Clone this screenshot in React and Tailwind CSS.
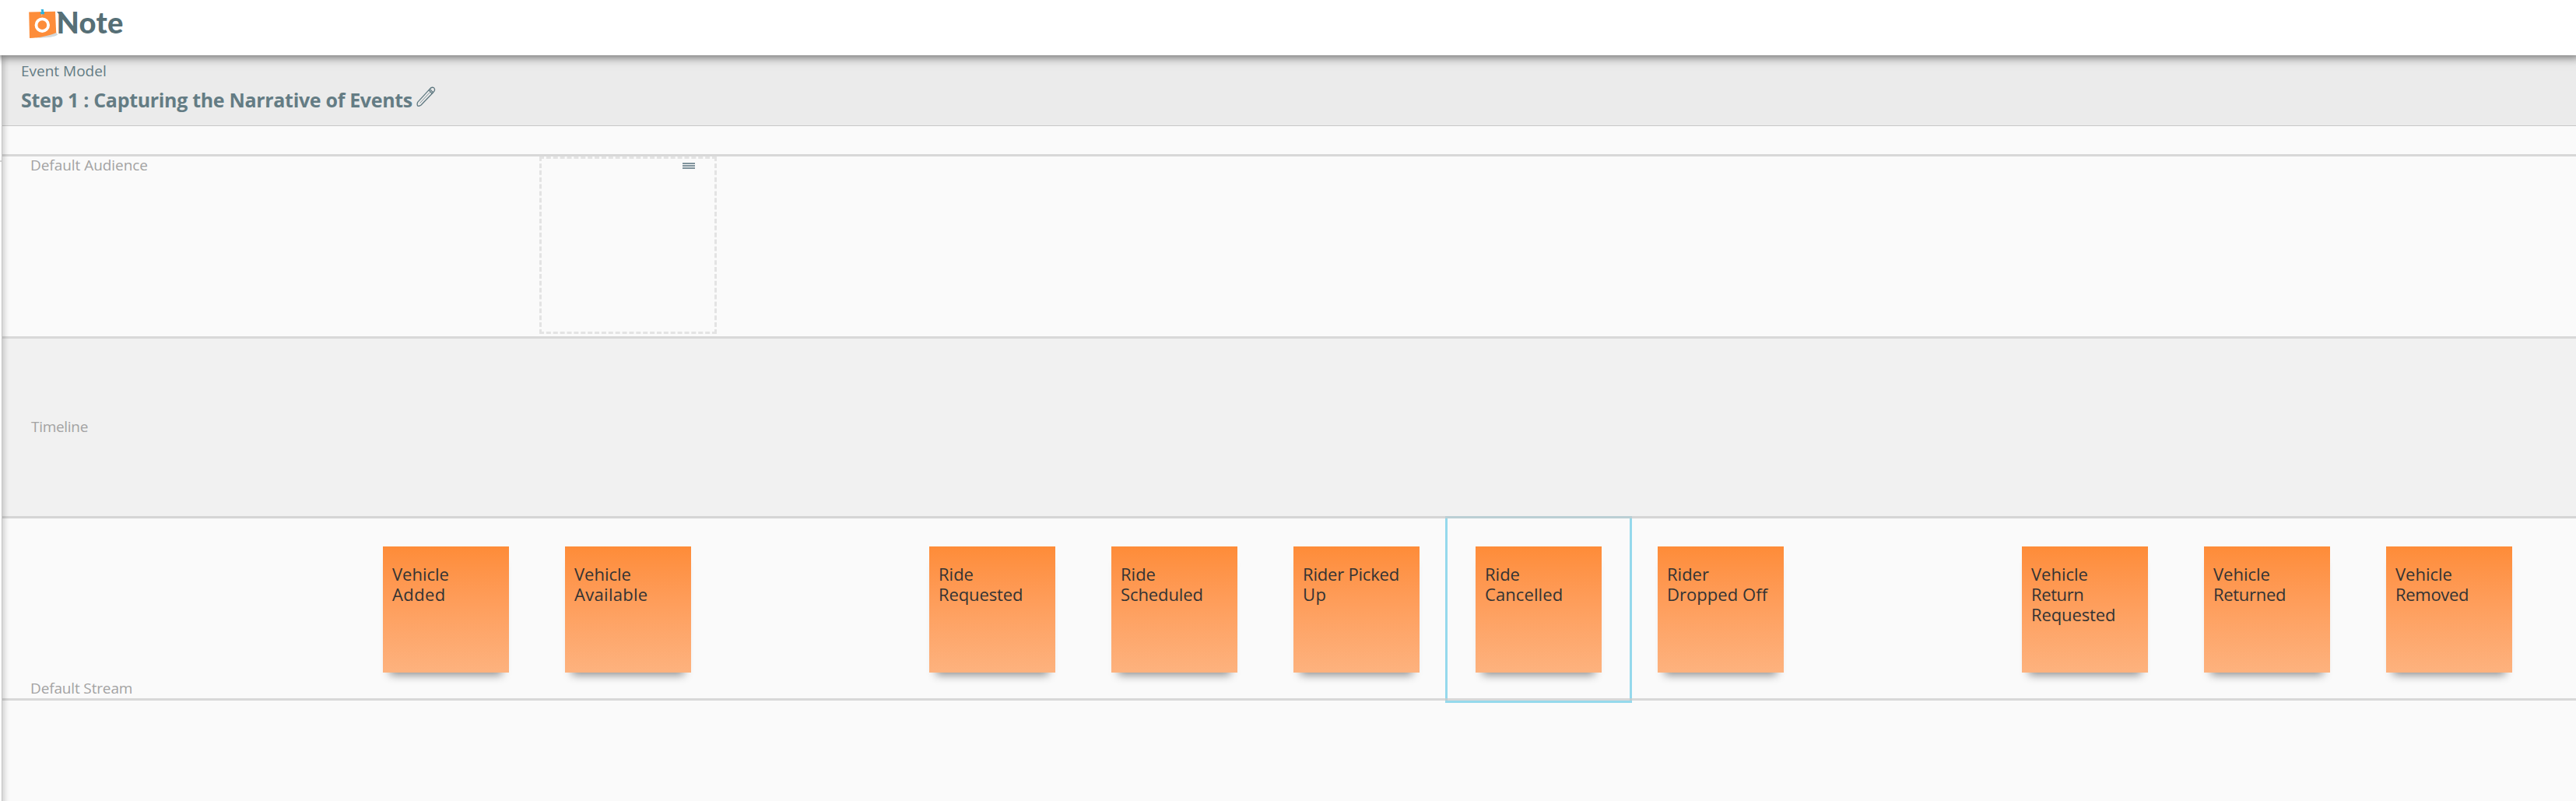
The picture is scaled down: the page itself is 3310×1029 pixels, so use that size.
const COLUMNS = [
  [['Vehicle', ''], ['Added', 'tracking-[0.4px]']],
  [['Vehicle', ''], ['Available', 'tracking-[0.3px]']],
  null,
  [['Ride', ''], ['Requested', 'tracking-[-0.1px]']],
  [['Ride', ''], ['Scheduled', 'tracking-[-0.1px]']],
  [['Rider Picked', 'tracking-[-0.2px]'], ['Up', 'tracking-[0.4px]']],
  [['Ride', ''], ['Cancelled', 'tracking-[0.1px]']],
  [['Rider', ''], ['Dropped Off', 'tracking-[0.05px]']],
  null,
  [['Vehicle', ''], ['Return', 'tracking-[-0.4px]'], ['Requested', 'tracking-[-0.1px]']],
  [['Vehicle', ''], ['Returned', 'tracking-[-0.3px]']],
  [['Vehicle', ''], ['Removed', 'tracking-[-0.3px]']],
];
const SELECTED = 6;

function Logo() {
  return (
    <div className="flex items-start pl-[36px] pt-[5px]">
      <svg className="mt-[5px] h-[42px] w-[40px]" viewBox="36 10 40 42">
        <path d="M46 47.5 L72 41.5 L74.2 44.6 C70 48 58 49 46 48.6 Z" fill="#d3d8d9" />
        <path d="M37.2 15.6 L71 14.8 L72.2 42 C63 46 51 48.6 38 49 Z" fill="#fd8d3a" />
        <circle cx="54.3" cy="32.2" r="7.8" fill="none" stroke="#fff" strokeWidth="3.8" />
        <path d="M52.6 12h3.4v3l1 0v3.2h-5v-2.6l1.4-.6z" fill="#2fb0dc" />
        <path d="M53.7 18v2.4" stroke="#e9c3a5" strokeWidth="0.8" />
        <path d="M73 15h6v7z" fill="#566f76" />
      </svg>
      <span className="-ml-[3.5px] font-['Lato',sans-serif] text-[38px] font-black leading-[46px] tracking-[0.3px] text-[#566f76]">Note</span>
    </div>
  );
}

function Pencil() {
  return (
    <svg className="ml-[5px] mt-[-2px] h-[28px] w-[26px]" viewBox="0 0 26 28" fill="none" stroke="#5f7880" strokeWidth="1.3" strokeLinejoin="round">
      <path d="M17.2 3.4 L1.6 20.4 Q0.6 23 1.6 25 Q3.8 25.8 6 24 L21.6 7.8" />
      <path d="M17.2 3.4 Q19.6 0.2 22.6 1.8 Q25 4.6 21.6 7.8 Z" />
      <path d="M16 4.8 L20.2 9.2" />
      <path d="M17.6 7.4 L4.6 21.4" strokeWidth="0.8" />
    </svg>
  );
}

function Line() {
  return <div className="relative z-10 h-[3px] shrink-0 bg-[rgba(203,203,203,0.72)]" />;
}

function Label({ children, className }) {
  return (
    <span className={`whitespace-nowrap text-[19px] leading-[22px] text-[#a3a3a3] ${className}`}>{children}</span>
  );
}

function Note({ lines }) {
  return (
    <div className="h-[162px] w-[162px] bg-linear-to-b from-[#fe8c38] to-[#fdb27e] pl-[12px] pt-[22px] text-[22px] leading-[26px] text-[#333] shadow-[0_12px_11px_-9px_rgba(0,0,0,0.45)]">
      {lines.map(([text, tracking]) => (
        <div key={text} className={`whitespace-nowrap ${tracking}`}>{text}</div>
      ))}
    </div>
  );
}

export default function App() {
  return (
    <div className="flex h-[1029px] w-[3310px] flex-col overflow-hidden bg-white font-['Open_Sans',sans-serif]">
      <header className="relative z-30 h-[71px] shrink-0 bg-white shadow-[0_-4px_12px_6px_rgba(0,0,0,0.6)]">
        <Logo />
      </header>
      <div className="flex min-h-0 flex-1">
        <aside className="relative z-20 -mb-[20px] w-[3px] shrink-0 border-r border-[#c4c4c4] bg-white pt-[135px] shadow-[0_0_8px_rgba(0,0,0,0.5)]">
          <div className="h-[2px] w-[2px] bg-[#d0d0d0]" />
        </aside>
        <main className="flex min-w-0 flex-1 flex-col bg-[#fafafa]">
          <div className="h-[91px] shrink-0 border-b border-[#c8c8c8] bg-[#ebebeb] pl-[24px] pt-[9px] text-[#647c84]">
            <div className="text-[19px] leading-[22px]">Event Model</div>
            <div className="mt-[11px] flex h-[30px]">
              <h1 className="whitespace-nowrap text-[25px] font-bold leading-[30px] tracking-[-0.32px]">
                Step 1 : Capturing the Narrative of Events
              </h1>
              <Pencil />
            </div>
          </div>
          <div className="h-[36px] shrink-0" />
          <Line />
          <section className="flex h-[231px] shrink-0">
            <div className="w-[690px] pl-[36px]">
              <Label className="tracking-[-0.05px]">Default Audience</Label>
            </div>
            <div className="flex h-[228px] w-[228px] flex-col items-end gap-px border-3 border-dashed border-[#e3e3e3] pr-[25px] pt-[5px]">
              <div className="h-[2px] w-[16px] bg-[#80939c]" />
              <div className="h-[2px] w-[16px] bg-[#80939c]" />
              <div className="h-[2px] w-[16px] bg-[#80939c]" />
            </div>
          </section>
          <Line />
          <section className="shrink-0 bg-[#f1f1f1]">
            <div className="flex h-[228px] pl-[37px] pt-[102px]">
              <Label className="tracking-[-0.3px]">Timeline</Label>
            </div>
            <Line />
          </section>
          <section className="flex h-[231px] shrink-0">
            <div className="flex w-[453px] items-end pb-[2px] pl-[36px]">
              <Label className="tracking-[-0.15px]">Default Stream</Label>
            </div>
            <div className="grid grid-cols-[repeat(12,234px)]">
              {COLUMNS.map((lines, i) => (
                <div
                  key={i}
                  className={`h-[234px] p-[36px] ${i === SELECTED ? 'outline-3 outline-[#95d9ec]' : ''}`}
                >
                  {lines && <Note lines={lines} />}
                </div>
              ))}
            </div>
          </section>
          <Line />
        </main>
      </div>
    </div>
  );
}
